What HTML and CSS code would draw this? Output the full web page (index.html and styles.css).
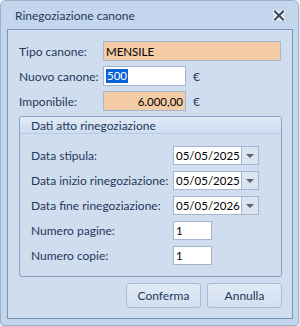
FILE: index.html
```html
<!DOCTYPE html>
<html lang="it">
<head>
<meta charset="UTF-8">
<title>Rinegoziazione canone</title>
<link rel="stylesheet" href="styles.css">
</head>
<body>
  <div class="window">
    <div class="titlebar">
      <span class="title">Rinegoziazione canone</span>
      <svg class="close" width="12" height="11" viewBox="0 0 12 11">
        <path d="M2 1.5 L10 9.5 M10 1.5 L2 9.5" stroke="#ffffff" stroke-width="4.5" stroke-linecap="square"/>
        <path d="M2 1.5 L10 9.5 M10 1.5 L2 9.5" stroke="#3b4a5e" stroke-width="2.2" stroke-linecap="square"/>
      </svg>
    </div>

    <div class="client">
      <div class="top-grid">
        <label>Tipo canone:</label>
        <div class="field peach wide">MENSILE</div>

        <label>Nuovo canone:</label>
        <div class="field-row">
          <div class="field white short"><span class="sel">500</span></div>
          <span class="euro">€</span>
        </div>

        <label>Imponibile:</label>
        <div class="field-row">
          <div class="field peach short right">6.000,00</div>
          <span class="euro">€</span>
        </div>
      </div>

      <div class="group">
        <div class="group-head">Dati atto rinegoziazione</div>
        <div class="group-body">
          <label>Data stipula:</label>
          <div class="date">
            <div class="field white date-text">05/05/2025</div>
            <div class="drop"><span class="arrow"></span></div>
          </div>

          <label>Data inizio rinegoziazione:</label>
          <div class="date">
            <div class="field white date-text">05/05/2025</div>
            <div class="drop"><span class="arrow"></span></div>
          </div>

          <label>Data fine rinegoziazione:</label>
          <div class="date">
            <div class="field white date-text">05/05/2026</div>
            <div class="drop"><span class="arrow"></span></div>
          </div>

          <label>Numero pagine:</label>
          <div class="field white num">1</div>

          <label>Numero copie:</label>
          <div class="field white num">1</div>
        </div>
      </div>

      <div class="buttons">
        <button class="btn">Conferma</button>
        <button class="btn">Annulla</button>
      </div>
    </div>
  </div>
</body>
</html>
```

FILE: styles.css
```css
* {
  box-sizing: border-box;
}

body {
  margin: 0;
  background-color: #eeeeee;
  font-family: Lato, "Noto Sans", sans-serif;
  font-size: 12px;
  color: #1e395b;
}

label {
  white-space: nowrap;
}

.window {
  width: 299px;
  height: 326px;
  border: 1px solid #9fb1ca;
  border-radius: 6px 6px 4px 4px;
  background-color: #c4d6ed;
  display: flex;
  flex-direction: column;
}

.titlebar {
  height: 28px;
  padding: 0 13px 0 14px;
  display: flex;
  align-items: center;
  justify-content: space-between;
}

.title {
  color: #1e395b;
}

.client {
  flex: 1;
  margin: 0 5px 6px 6px;
  border: 1px solid #7b94b7;
  background-color: #d0ddef;
  padding: 11px 10px 0 11px;
}

.top-grid {
  display: grid;
  grid-template-columns: 84px auto;
  grid-auto-rows: 20px;
  row-gap: 5px;
  align-items: center;
}

.field {
  height: 20px;
  border: 1px solid #a7b6cb;
  padding: 0 2px;
  display: flex;
  align-items: center;
  color: #000;
  font-size: 11.5px;
  white-space: nowrap;
  overflow: hidden;
}

.peach {
  background-color: #f3cba6;
}

.white {
  background-color: #fff;
}

.wide {
  width: 178px;
}

.short {
  width: 83px;
}

.right {
  justify-content: flex-end;
}

.field-row {
  display: flex;
  align-items: center;
  gap: 7px;
}

.euro {
  color: #1e395b;
}

.sel {
  background-color: #0a64d4;
  color: #fff;
  padding: 0 1px;
  line-height: 14px;
}

.group {
  margin-top: 5px;
  border: 1px solid #8aa0c0;
  border-radius: 3px;
}

.group-head {
  height: 17px;
  padding-left: 11px;
  display: flex;
  align-items: center;
  background: linear-gradient(#e2ebf7, #cddcf0);
  border-bottom: 1px solid #b9cbe2;
  border-radius: 2px 2px 0 0;
}

.group-body {
  display: grid;
  grid-template-columns: 142px auto;
  grid-auto-rows: 19px;
  row-gap: 6px;
  align-items: center;
  padding: 12px 0 11px 11px;
}

.group-body .field {
  height: 19px;
}

.date {
  display: flex;
}

.date-text {
  width: 69px;
}

.drop {
  width: 17px;
  height: 19px;
  border: 1px solid #a7b6cb;
  border-left: none;
  background-color: #dbe4f1;
  display: flex;
  align-items: center;
  justify-content: center;
}

.arrow {
  width: 0;
  height: 0;
  border-left: 4px solid transparent;
  border-right: 4px solid transparent;
  border-top: 4px solid #56657a;
}

.num {
  width: 39px;
}

.buttons {
  margin-top: 6px;
  display: flex;
  justify-content: flex-end;
  gap: 6px;
}

.btn {
  width: 75px;
  height: 25px;
  border: 1px solid #a9bcd6;
  border-radius: 3px;
  background: linear-gradient(#e1eaf6, #d2dff0);
  font-family: inherit;
  font-size: 12px;
  color: #1e395b;
  padding: 0;
}
```
